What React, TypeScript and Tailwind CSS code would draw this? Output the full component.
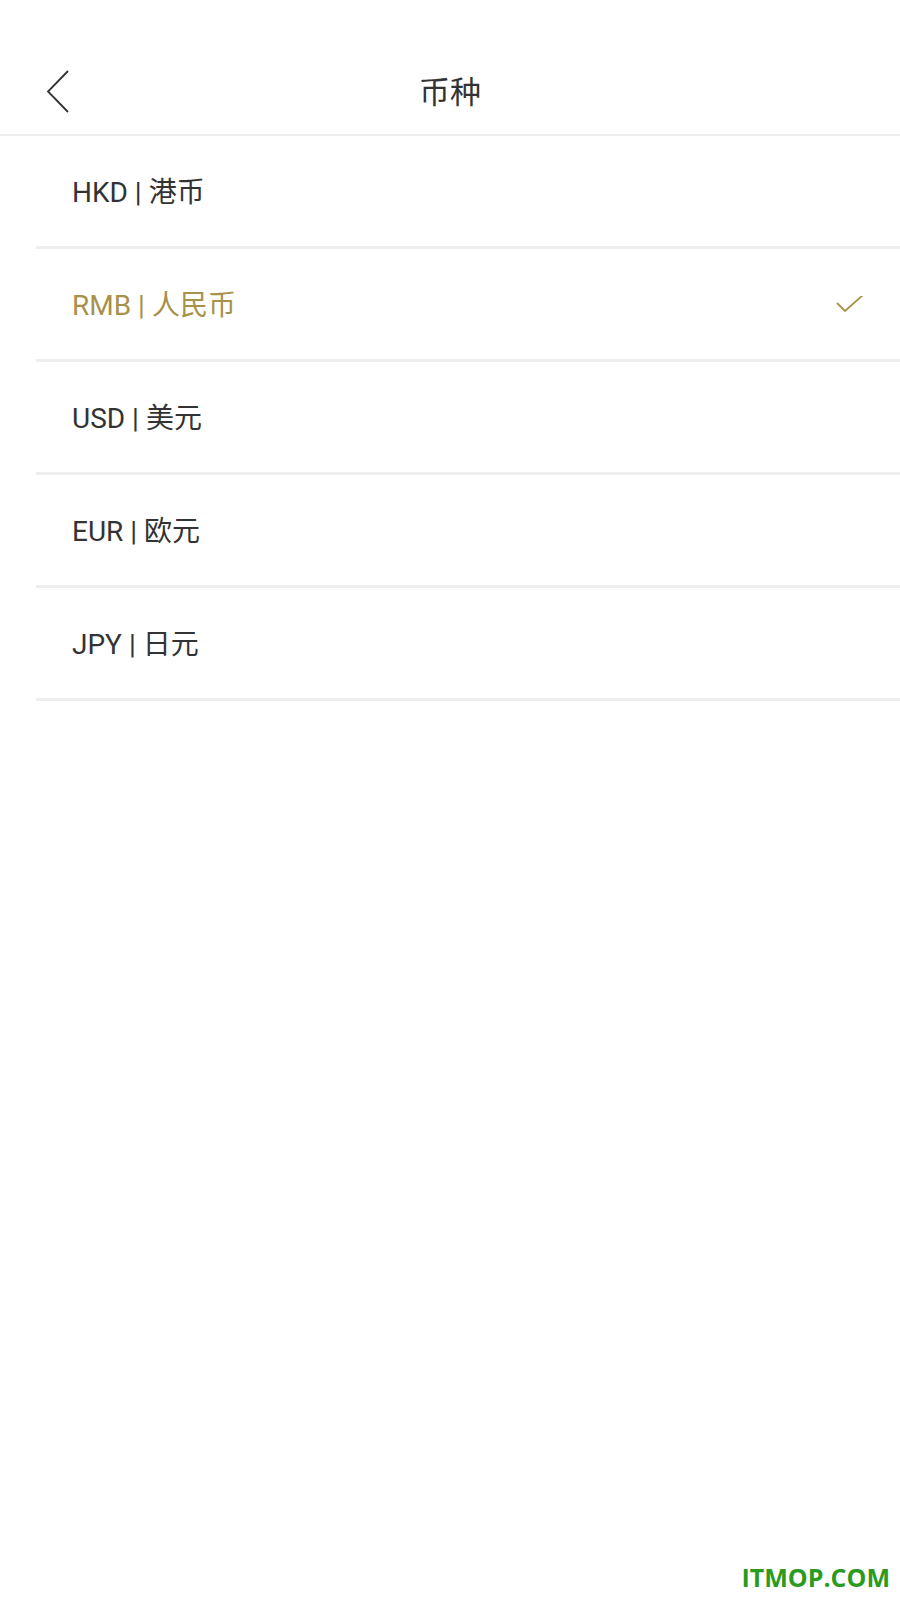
import React from "react";

const items = [
  { code: "HKD", name: "港币" },
  { code: "RMB", name: "人民币", selected: true },
  { code: "USD", name: "美元" },
  { code: "EUR", name: "欧元" },
  { code: "JPY", name: "日元" },
];

export default function App() {
  return (
    <div
      className="relative w-[900px] h-[1600px] bg-white overflow-hidden"
      style={{ fontFamily: 'Roboto, "Noto Sans CJK SC", sans-serif' }}
    >
      <div className="h-[50px]" />
      <div className="relative h-[86px] flex items-center justify-center border-b-[2px] border-[#eeeeee]">
        <svg
          className="absolute left-[46px] top-[20px]"
          width="24"
          height="44"
          viewBox="0 0 24 44"
          fill="none"
        >
          <path d="M22 1 L2 21.5 L22 42" stroke="#333333" strokeWidth="1.8" />
        </svg>
        <span className="text-[31px] text-[#333333] leading-none">币种</span>
      </div>
      <div>
        {items.map((it) => (
          <div key={it.code} className="pl-[36px]">
            <div className="h-[113px] flex items-center justify-between pt-[4px] pl-[36px] pr-[36px] border-b-[3px] border-[#eeeeee]">
              <span
                className={
                  "text-[28px] leading-none " +
                  (it.selected ? "text-[#a8914b]" : "text-[#333333]")
                }
              >
                {it.code} | {it.name}
              </span>
              {it.selected && (
                <svg width="28" height="20" viewBox="0 0 28 20" fill="none">
                  <path d="M1 7 L9 15 L27 -1" stroke="#a8914b" strokeWidth="1.8" />
                </svg>
              )}
            </div>
          </div>
        ))}
      </div>
      <div
        className="absolute right-[10px] bottom-[10px] text-[25px] font-bold text-[#2b9b1f] leading-none"
        style={{ fontFamily: '"Open Sans", sans-serif' }}
      >
        ITMOP.COM
      </div>
    </div>
  );
}
